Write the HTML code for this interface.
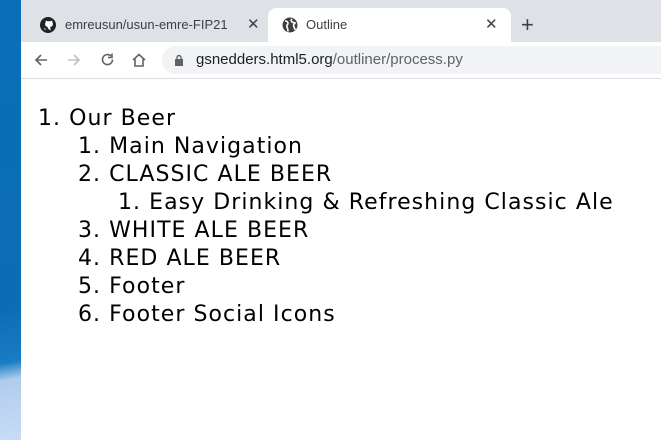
<!DOCTYPE html>
<html><head><style>
body{margin:0;width:661px;height:440px;overflow:hidden;background:#fff;font-family:"Liberation Sans",sans-serif;position:relative}
.side{position:absolute;left:0;top:0;width:21px;height:440px;background:linear-gradient(170deg,#0a6fb8 0%,#0b6db6 70%,#1a7cc4 82%,#b0cdee 86%,#c8dcf4 100%)}
.tabs{position:absolute;left:21px;top:0;width:640px;height:42px;background:#dee1e6}
.tab{position:absolute;top:8px;height:34px;font-size:13px;color:#3c4043;line-height:34px}
.tab1{left:19px}
.tab2{left:247px;width:243px;background:#fff;border-radius:8px 8px 0 0}
.bar{position:absolute;left:21px;top:42px;width:640px;height:36px;background:#fff;border-bottom:1px solid #dadce0}
.pill{position:absolute;left:141px;top:4px;width:520px;height:28px;border-radius:14px;background:#f1f3f4;font-size:15px;line-height:28px;color:#202124}
.content{position:absolute;left:0;top:105px;font-family:"DejaVu Sans",sans-serif;font-size:22px;line-height:28px;color:#000;letter-spacing:1.05px}
.content div{white-space:nowrap}
</style></head><body>
<div class="side"></div>
<div class="tabs">
 <div class="tab tab1"><svg width="16" height="16" viewBox="0 0 16 16" style="position:absolute;left:0;top:9px"><circle cx="8" cy="8" r="8" fill="#202124"/><path d="M5.5 13.5v-2c-2 .3-2.5-1-2.7-1.5M10.5 13.5v-2c0-.8-.3-1.2-.6-1.4 1.8-.2 3-1 3-3.2 0-.7-.2-1.3-.6-1.7.1-.5.1-1.1-.1-1.6-.6 0-1.3.4-1.7.7a6 6 0 0 0-3 0c-.4-.3-1.1-.7-1.7-.7-.2.5-.2 1.1-.1 1.6-.4.4-.6 1-.6 1.7 0 2.2 1.2 3 3 3.2-.3.2-.5.6-.6 1" fill="#fff"/></svg><span style="position:absolute;left:25px;white-space:nowrap">emreusun/usun-emre-FIP21</span><span style="position:absolute;left:207px;font-size:15px">✕</span></div>
 <div class="tab tab2"><svg width="16" height="16" viewBox="0 0 16 16" style="position:absolute;left:14px;top:9px"><circle cx="8" cy="8" r="7.5" fill="#3c4043"/><path d="M3 4c2 0 3 1 3 2.5S4 8 5 10s1 3 1 4.5M10 2c-1 1-1 2 0 3s2 0 3 1c-1 1-2 2-1 4s1 2 1 3" stroke="#fff" stroke-width="1.6" fill="none"/></svg><span style="position:absolute;left:38px">Outline</span><span style="position:absolute;left:217px;font-size:15px">✕</span></div>
 <div style="position:absolute;left:500px;top:10px;font-size:22px;color:#3c4043;line-height:30px">+</div>
</div>
<div class="bar">
 <svg style="position:absolute;left:13px;top:11px" width="14" height="14" viewBox="0 0 14 14"><path d="M13 7H2M7 2L2 7l5 5" stroke="#5f6368" stroke-width="1.6" fill="none"/></svg>
 <svg style="position:absolute;left:46px;top:11px" width="14" height="14" viewBox="0 0 14 14"><path d="M1 7h11M7 2l5 5-5 5" stroke="#bdc1c6" stroke-width="1.6" fill="none"/></svg>
 <svg style="position:absolute;left:79px;top:10px" width="15" height="15" viewBox="0 0 15 15"><path d="M12.5 7.5A5 5 0 1 1 11 4M12 1.5v4H8" stroke="#5f6368" stroke-width="1.6" fill="none"/></svg>
 <svg style="position:absolute;left:110px;top:10px" width="16" height="16" viewBox="0 0 16 16"><path d="M2 8L8 2.5 14 8M4 7v7h8V7" stroke="#5f6368" stroke-width="1.6" fill="none"/></svg>
 <div class="pill"><svg style="position:absolute;left:12px;top:8px" width="10" height="12" viewBox="0 0 10 12"><rect x="1" y="5" width="8" height="7" fill="#5f6368"/><path d="M3 5V3.5a2 2 0 0 1 4 0V5" stroke="#5f6368" stroke-width="1.4" fill="none"/></svg><span style="position:absolute;left:34px">gsnedders.html5.org<span style="color:#5f6368">/outliner/process.py</span></span></div>
</div>
<div class="content">
<div style="padding-left:38px">1. Our Beer</div>
<div style="padding-left:78px">1. Main Navigation</div>
<div style="padding-left:78px">2. CLASSIC ALE BEER</div>
<div style="padding-left:118px">1. Easy Drinking &amp; Refreshing Classic Ale</div>
<div style="padding-left:78px">3. WHITE ALE BEER</div>
<div style="padding-left:78px">4. RED ALE BEER</div>
<div style="padding-left:78px">5. Footer</div>
<div style="padding-left:78px">6. Footer Social Icons</div>
</div>
</body></html>
